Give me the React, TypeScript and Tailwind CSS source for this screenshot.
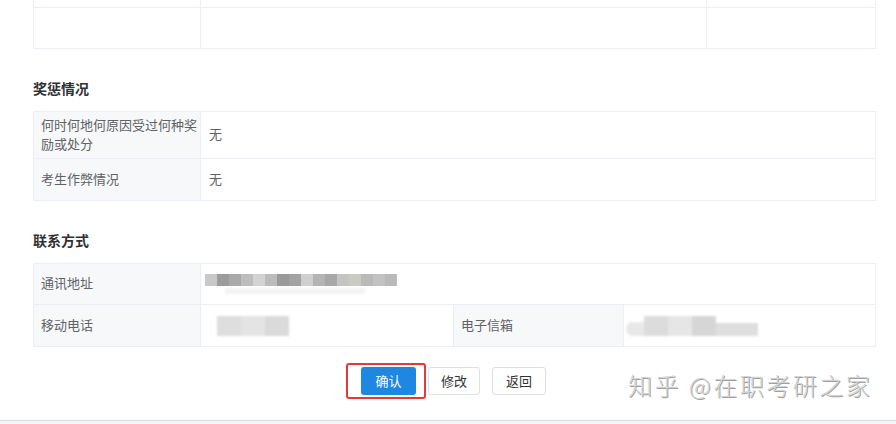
const addrBlocks = [
  "bg-[#c9c9c9]",
  "bg-[#9c9c9c]",
  "bg-[#a9a9a9]",
  "bg-[#bdbdbd]",
  "bg-[#d3d3d3]",
  "bg-[#bcbcbc]",
  "bg-[#9a9a9a]",
  "bg-[#a3a3a3]",
  "bg-[#cfcfcf]",
  "bg-[#b4b4b4]",
  "bg-[#a8a8a8]",
  "bg-[#c4c4c4]",
  "bg-[#cbcbc6]",
  "bg-[#bababa]",
  "bg-[#c2c2c2]",
  "bg-[#b9b9b9]",
]

function Mosaic({ blocks, className }: { blocks: string[]; className: string }) {
  return (
    <div className={"flex " + className}>
      {blocks.map((b, i) => (
        <div key={i} className={"h-full w-[12px] " + b} />
      ))}
    </div>
  )
}

function SectionTitle({ children }: { children: string }) {
  return <h3 className="text-[14px] font-bold leading-[20px] text-[#303133]">{children}</h3>
}

const label = "flex items-center border-r border-[#ebeef5] bg-[#f7f8fa] pb-[3px] pl-[7px] pr-[1px] text-[13px] leading-[19px] text-[#606266]"
const value = "flex items-center px-[8px] pb-[3px] text-[13px] leading-[19px] text-[#606266]"

export default function App() {
  return (
    <div
      className="relative h-[424px] w-[896px] overflow-hidden bg-white"
      style={{ fontFamily: '"Noto Sans CJK SC", "Microsoft YaHei", sans-serif' }}
    >
      <div className="ml-[33px] w-[843px]">
        {/* partial table cut at top */}
        <div className="border-x border-b border-[#ebeef5]">
          <div className="grid h-[8px] grid-cols-[167px_506px_1fr] border-b border-[#ebeef5]">
            <div className="border-r border-[#ebeef5]" />
            <div className="border-r border-[#ebeef5]" />
            <div />
          </div>
          <div className="grid h-[40px] grid-cols-[167px_506px_1fr]">
            <div className="border-r border-[#ebeef5]" />
            <div className="border-r border-[#ebeef5]" />
            <div />
          </div>
        </div>

        <div className="mt-[29px]">
          <SectionTitle>奖惩情况</SectionTitle>
        </div>
        <div className="mt-[13px] border border-[#ebeef5]">
          <div className="grid h-[47px] grid-cols-[167px_1fr] border-b border-[#ebeef5]">
            <div className={label}>何时何地何原因受过何种奖励或处分</div>
            <div className={value}>无</div>
          </div>
          <div className="grid h-[41px] grid-cols-[167px_1fr]">
            <div className={label}>考生作弊情况</div>
            <div className={value}>无</div>
          </div>
        </div>

        <div className="mt-[29px]">
          <SectionTitle>联系方式</SectionTitle>
        </div>
        <div className="mt-[13px] border border-[#ebeef5]">
          <div className="grid h-[41px] grid-cols-[167px_1fr] border-b border-[#ebeef5]">
            <div className={label}>通讯地址</div>
            <div className="flex flex-col justify-center pl-[4px]">
              <Mosaic blocks={addrBlocks} className="h-[12px] blur-[0.6px]" />
              <div className="ml-[20px] mt-[2px] h-[6px] w-[140px] bg-[#f3f3f3] blur-[1px]" />
            </div>
          </div>
          <div className="grid h-[41px] grid-cols-[167px_253px_170px_1fr]">
            <div className={label}>移动电话</div>
            <div className="flex items-center border-r border-[#ebeef5] pl-[16px]">
              <div className="flex h-[20px] blur-[0.8px]">
                <div className="h-full w-[24px] bg-[#dedede]" />
                <div className="h-full w-[24px] bg-[#e4e4e4]" />
                <div className="h-full w-[24px] bg-[#dadada]" />
              </div>
            </div>
            <div className={label}>电子信箱</div>
            <div className="flex items-center pl-[2px]">
              <div className="flex h-[20px] items-end blur-[0.8px]">
                <div className="h-[14px] w-[18px] rounded-l-full bg-[#e8e8e8]" />
                <div className="h-full w-[24px] bg-[#dcdcdc]" />
                <div className="h-full w-[24px] bg-[#e6e6e6]" />
                <div className="h-full w-[24px] bg-[#d6d6d6]" />
                <div className="h-[13px] w-[42px] bg-[#dedede]" />
              </div>
            </div>
          </div>
        </div>

        <div className="mt-[16px] flex items-center justify-center pr-[17px]">
          <div className="rounded-[3px] border-2 border-[#e53935] py-[2px] pl-[13px] pr-[8px]">
            <button className="block h-[28px] w-[55px] rounded-[3px] bg-[#1e87e1] text-[13px] text-white">确认</button>
          </div>
          <div className="ml-[2px] flex items-center gap-[12px]">
            <button className="h-[28px] w-[52px] rounded-[3px] border border-[#dcdfe6] bg-white text-[13px] text-[#333]">
              修改
            </button>
            <button className="h-[28px] w-[54px] rounded-[3px] border border-[#dcdfe6] bg-white text-[13px] text-[#333]">
              返回
            </button>
          </div>
        </div>
      </div>

      <div className="absolute bottom-0 left-0 h-[4px] w-full border-t border-[#d9dcdf] bg-[#f4f5f7]" />

      <div
        className="absolute left-[628px] top-[368px] text-[24px] font-light leading-[34px] tracking-[2.5px] text-[#d3d3d3]"
        style={{ textShadow: "1px 1px 0 #a0a0a0" }}
      >
        知乎 @在职考研之家
      </div>
    </div>
  )
}
